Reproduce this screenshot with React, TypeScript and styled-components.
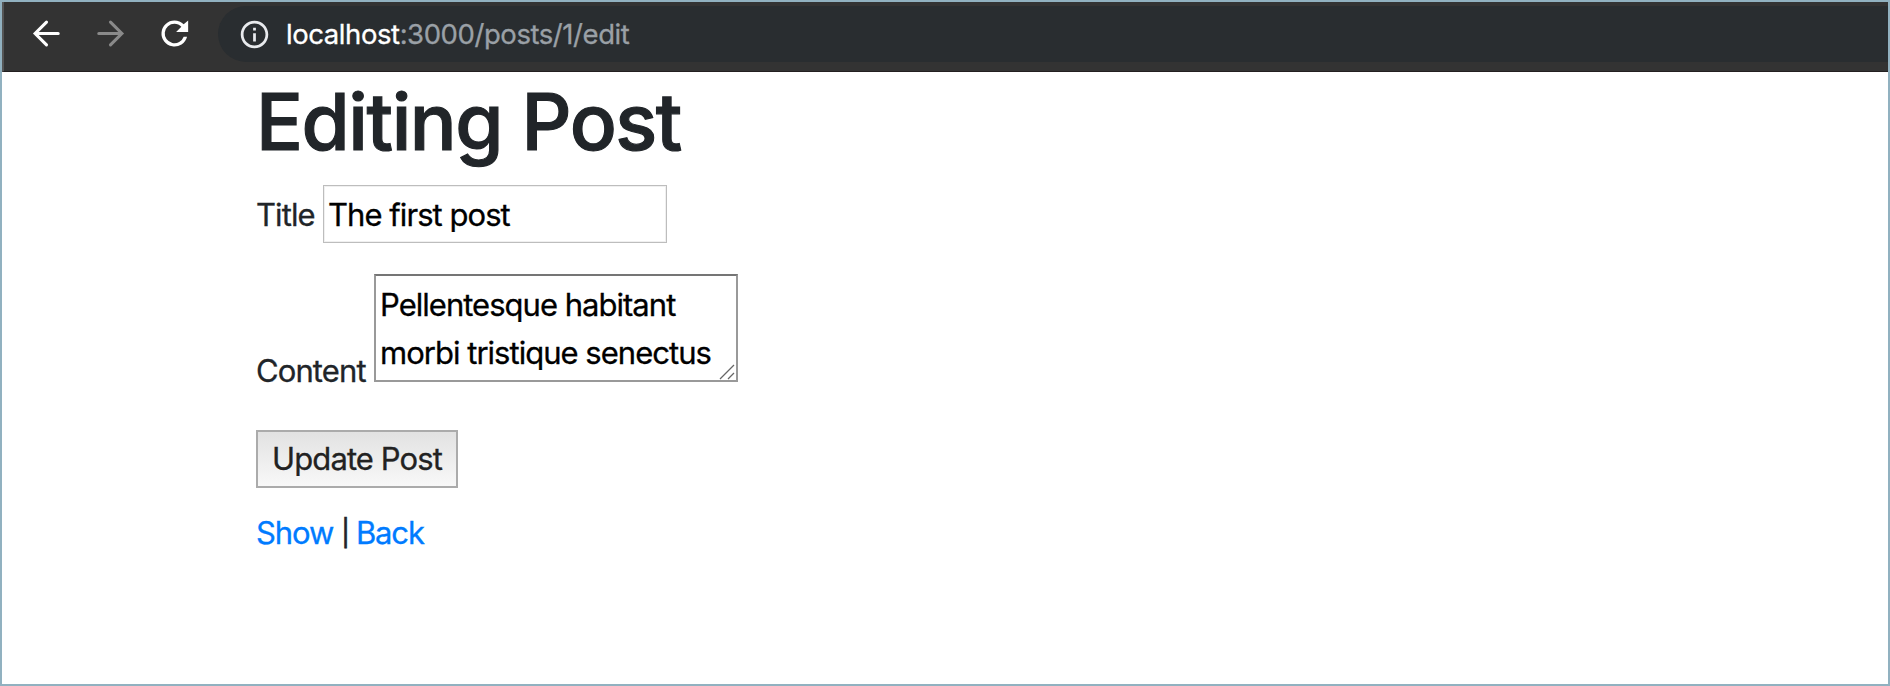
import React from 'react';
import styled, { createGlobalStyle } from 'styled-components';

const GlobalStyle = createGlobalStyle`
  * { box-sizing: border-box; }
  body {
    margin: 0;
    background: #fff;
    color: #212529;
    font-family: Inter, "Liberation Sans", sans-serif;
    font-size: 31px;
    line-height: 48px;
    -webkit-text-stroke: 0.3px;
  }
`;

const Window = styled.div`
  height: 686px;
  border: 2px solid #91b1c0;
  background: #fff;
  overflow: hidden;
`;

const Toolbar = styled.header`
  display: flex;
  height: 70px;
  padding-top: 4px;
  background: #333;
  border-left: 2px solid #555;
  border-bottom: 1px solid #231f20;
`;

const NavButtons = styled.nav`
  display: flex;
  align-items: flex-start;
  gap: 25px;
  width: 214px;
  padding: 8px 0 0 22.5px;
`;

const NavIcon = styled.svg<{ $dim?: boolean }>`
  display: block;
  flex: none;
  width: 39px;
  height: 39px;
  color: ${(p) => (p.$dim ? '#8a8a8a' : '#fff')};
`;

const AddressBar = styled.div`
  flex: 1;
  display: flex;
  align-items: center;
  height: 56px;
  padding-left: 20px;
  border-radius: 28px 0 0 28px;
  background: #292d30;
`;

const InfoIcon = styled.svg`
  flex: none;
  width: 33px;
  height: 33px;
  color: #e8eaed;
`;

const Url = styled.span`
  margin: 0 0 1px 15px;
  color: #9aa0a6;
  font-size: 27.5px;
  letter-spacing: -0.43px;
`;

const Host = styled.span`
  color: #fff;
`;

const Page = styled.main`
  padding: 2px 254px 0;
`;

const Heading = styled.h1`
  margin: 0 0 15px;
  font-size: 78px;
  font-weight: 500;
  line-height: 96px;
  letter-spacing: -1.45px;
  -webkit-text-stroke: 1.1px;
`;

const Field = styled.div<{ $alignEnd?: boolean; $space: number }>`
  display: flex;
  align-items: ${(p) => (p.$alignEnd ? 'flex-end' : 'center')};
  margin-bottom: ${(p) => p.$space}px;
`;

const Label = styled.label<{ $width: number; $drop?: number }>`
  width: ${(p) => p.$width}px;
  padding-top: 1px;
  margin-bottom: ${(p) => -(p.$drop ?? 0)}px;
  white-space: nowrap;
  letter-spacing: -0.9px;
`;

const TextInput = styled.input`
  width: 344px;
  height: 58px;
  padding: 0 4px;
  border: 1px solid #bdbdbd;
  box-shadow: inset 0 0 0 1px #f0f0f0;
  color: #000;
  background: #fff;
  font: inherit;
  letter-spacing: -0.95px;
  outline: none;
`;

const AreaFrame = styled.div`
  position: relative;
  width: 364px;
  height: 108px;
`;

const TextArea = styled.textarea`
  display: block;
  width: 100%;
  height: 100%;
  padding: 5px 4px 3px;
  border: 2px solid #999;
  border-top-color: #757575;
  color: #000;
  background: #fff;
  font: inherit;
  letter-spacing: -0.98px;
  resize: none;
  overflow: hidden;
  outline: none;
`;

const Grip = styled.svg`
  position: absolute;
  right: 3px;
  bottom: 2px;
  width: 16px;
  height: 16px;
`;

const SubmitButton = styled.button`
  display: block;
  width: 202px;
  height: 58px;
  padding: 0;
  border: 2px solid #ababab;
  background: linear-gradient(#e2e2e2, #f8f8f8);
  color: #222;
  font: inherit;
  letter-spacing: -0.9px;
  white-space: nowrap;
`;

const Links = styled.div`
  display: flex;
  align-items: center;
  margin-top: 21px;
  letter-spacing: -1.1px;
`;

const Divider = styled.span`
  margin: 0 6px 0 8px;
  font-size: 26px;
  letter-spacing: 0;
  -webkit-text-stroke: 0.7px;
`;

const Link = styled.a`
  color: #007bff;
  text-decoration: none;
`;

const arrowProps = { fill: 'none', stroke: 'currentColor', strokeWidth: 1.9, strokeLinecap: 'round' as const };

export default function App() {
  return (
    <>
      <GlobalStyle />
      <Window>
        <Toolbar>
          <NavButtons>
            <NavIcon viewBox="0 0 24 24">
              <path {...arrowProps} d="M19.2 12H5M12 5L5 12l7 7" />
            </NavIcon>
            <NavIcon viewBox="0 0 24 24" $dim>
              <path {...arrowProps} d="M4.8 12H19M12 5l7 7-7 7" />
            </NavIcon>
            <NavIcon viewBox="0 0 24 24">
              <path
                fill="currentColor"
                d="M17.65 6.35A7.96 7.96 0 0 0 12 4a8 8 0 1 0 7.73 10h-2.08A6 6 0 1 1 12 6c1.66 0 3.14.69 4.22 1.78L13 11h7.4V4z"
              />
            </NavIcon>
          </NavButtons>
          <AddressBar>
            <InfoIcon viewBox="0 0 24 24">
              <path
                fill="currentColor"
                d="M11 7h2v2h-2zm0 4h2v6h-2zm1-9C6.48 2 2 6.48 2 12s4.48 10 10 10 10-4.48 10-10S17.52 2 12 2zm0 18c-4.41 0-8-3.59-8-8s3.59-8 8-8 8 3.59 8 8-3.59 8-8 8z"
              />
            </InfoIcon>
            <Url>
              <Host>localhost</Host>:3000/posts/1/edit
            </Url>
          </AddressBar>
        </Toolbar>
        <Page>
          <Heading>Editing Post</Heading>
          <Field $space={31}>
            <Label htmlFor="title" $width={67}>Title</Label>
            <TextInput id="title" defaultValue="The first post" />
          </Field>
          <Field $space={48} $alignEnd>
            <Label htmlFor="content" $width={118} $drop={13}>Content</Label>
            <AreaFrame>
              <TextArea id="content" defaultValue={'Pellentesque habitant\nmorbi tristique senectus'} />
              <Grip viewBox="0 0 16 16">
                <path d="M1 15L15 1M9 15l6-6" stroke="#666" strokeWidth="1.3" fill="none" />
              </Grip>
            </AreaFrame>
          </Field>
          <SubmitButton>Update Post</SubmitButton>
          <Links>
            <Link>Show</Link>
            <Divider>|</Divider>
            <Link>Back</Link>
          </Links>
        </Page>
      </Window>
    </>
  );
}
